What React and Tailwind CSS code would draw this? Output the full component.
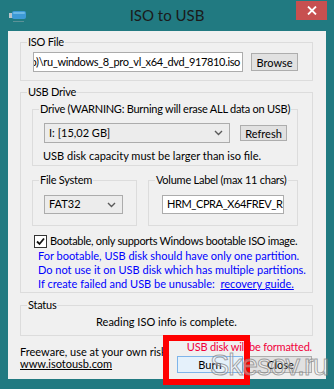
import React from 'react';

const UsbIcon = () => (
    <svg width="18" height="12" viewBox="0 0 18 12">
        <rect x="0" y="2" width="4" height="5" fill="#b9c4c9" />
        <rect x="3" y="0" width="14" height="8" rx="2" fill="#3d9ad6" />
        <rect x="4" y="1" width="12" height="2" rx="1" fill="#6cb8e6" />
        <rect x="4" y="10" width="11" height="1" fill="#5c9297" />
    </svg>
);

const Chevron = () => (
    <svg width="9" height="6" viewBox="0 0 9 6" className="shrink-0">
        <polyline points="1,1 4.5,4.5 8,1" fill="none" stroke="#5a5a5a" strokeWidth="1.4" />
    </svg>
);

const Group = ({ label, className = '', children }) => (
    <fieldset className={`border border-[#dcdcdc] min-w-0 ${className}`}>
        <legend className="ml-[6px] px-[1px] leading-[16px] whitespace-nowrap tracking-[-0.25px]">{label}</legend>
        {children}
    </fieldset>
);

const Button = ({ children, className = '' }) => (
    <div className={`flex items-center justify-center border border-[#adadad] bg-[#e1e1e1] leading-none ${className}`}>
        {children}
    </div>
);

const Select = ({ value, className = '' }) => (
    <div className={`flex items-center justify-between border border-[#acacac] bg-[#ececec] pl-[4px] pr-[6px] ${className}`}>
        <span>{value}</span>
        <Chevron />
    </div>
);

export default function App() {
    return (
        <div className="relative w-[334px] h-[389px] overflow-hidden bg-[#217a81] font-['Lato',sans-serif] text-[11px] text-black">
            {/* title bar */}
            <div className="grid grid-cols-[1fr_auto_1fr] h-[31px]">
                <div className="pl-[9px] pt-[11px]">
                    <UsbIcon />
                </div>
                <div className="pt-[5px] text-[15px] leading-[20px] text-[#1b1b1b]">ISO to USB</div>
                <div className="flex justify-end pr-[7px] pt-[1px]">
                    <div className="flex items-center justify-center w-[31px] h-[19px] bg-[#c75050]">
                        <svg width="10" height="9" viewBox="0 0 10 9">
                            <path d="M1 0.5 L9 8.5 M9 0.5 L1 8.5" stroke="#fff" strokeWidth="1.8" />
                        </svg>
                    </div>
                </div>
            </div>

            {/* client area */}
            <div className="ml-[8px] w-[318px] h-[348px] bg-[#f0f0f0] pl-[12px] pr-[13px] flex flex-col">
                <Group label="ISO File" className="mt-[3px]">
                    <div className="flex items-center pt-[2px] pb-[8px] pl-[12px]">
                        <div className="flex justify-end items-center w-[210px] h-[20px] overflow-hidden whitespace-nowrap border border-[#acacac] bg-white pr-[2px] tracking-[-0.35px]">
                            (Windows 8 Pro)\ru_windows_8_pro_vl_x64_dvd_917810.iso
                        </div>
                        <Button className="ml-[8px] w-[47px] h-[18px]">Browse</Button>
                    </div>
                </Group>

                <Group label="USB Drive" className="mt-[3px]">
                    <Group label="Drive (WARNING: Burning will erase ALL data on USB)" className="mt-[1px] ml-[11px] w-[266px]">
                        <div className="flex items-center pt-[6px] pl-[11px]">
                            <Select value="I: [15,02 GB]" className="w-[186px] h-[20px]" />
                            <Button className="ml-[10px] w-[47px] h-[16px]">Refresh</Button>
                        </div>
                        <div className="mt-[5px] mb-[1px] pl-[10px] leading-[16px] whitespace-nowrap">
                            USB disk capacity must be larger than iso file.
                        </div>
                    </Group>

                    <div className="flex mt-[6px]">
                        <Group label="File System" className="ml-[11px] w-[105px]">
                            <div className="pt-[7px] pb-[11px] pl-[11px]">
                                <Select value="FAT32" className="w-[79px] h-[19px]" />
                            </div>
                        </Group>
                        <Group label="Volume Label (max 11 chars)" className="ml-[11px] w-[150px]">
                            <div className="pt-[7px] pb-[11px] pl-[13px]">
                                <div className="flex items-center w-[122px] h-[19px] overflow-hidden whitespace-nowrap border border-[#acacac] bg-white pl-[4px] tracking-[-0.4px]">
                                    HRM_CPRA_X64FREV_RU-RU_DV5
                                </div>
                            </div>
                        </Group>
                    </div>

                    <div className="flex items-center mt-[7px] ml-[13px] h-[16px] whitespace-nowrap">
                        <div className="flex items-center justify-center w-[13px] h-[13px] border border-[#333] bg-white">
                            <svg width="9" height="9" viewBox="0 0 9 9">
                                <path d="M1 4.5 L3.5 7 L8 1.5" fill="none" stroke="#111" strokeWidth="1.8" />
                            </svg>
                        </div>
                        <span className="ml-[3px] tracking-[-0.3px]">Bootable, only supports Windows bootable ISO image.</span>
                    </div>

                    <div className="pl-[17px] pb-[1px] leading-[14px] text-[#0000ff] whitespace-nowrap">
                        <div>For bootable, USB disk should have only one partition.</div>
                        <div>Do not use it on USB disk which has multiple partitions.</div>
                        <div>
                            If create failed and USB be unusable:&nbsp;&nbsp;<span className="underline">recovery guide.</span>
                        </div>
                    </div>
                </Group>

                <Group label="Status" className="mt-[4px]">
                    <div className="pt-[1px] pb-[5px] leading-[16px] text-center">Reading ISO info is complete.</div>
                </Group>

                <div className="flex justify-between whitespace-nowrap">
                    <div className="mt-[10px] leading-[12px]">
                        <div>Freeware, use at your own risk.</div>
                        <div className="underline">www.isotousb.com</div>
                    </div>
                    <div className="flex flex-col items-end mr-[1px]">
                        <div className="mt-[3px] leading-[16px] text-[#f0003c] tracking-[-0.2px]">USB disk will be formatted.</div>
                        <div className="flex mt-[1px]">
                            <div className="flex items-center justify-center w-[66px] h-[17px] border border-[#7eb4ea] bg-[#e5f1fb] leading-none">Burn</div>
                            <Button className="ml-[6px] w-[63px] h-[17px]">Close</Button>
                        </div>
                    </div>
                </div>
            </div>

            {/* annotation overlay */}
            <div className="absolute left-[163px] top-[335px] w-[87px] h-[50px] border-[6px] border-[#ff0000]" />
            <div className="absolute left-[210px] top-[347px] text-[29px] leading-[36px] font-['Liberation_Sans',sans-serif] tracking-[-1px] text-white/35 [-webkit-text-stroke:1px_rgba(125,125,125,0.7)]">
                Skesov.ru
            </div>
        </div>
    );
}
